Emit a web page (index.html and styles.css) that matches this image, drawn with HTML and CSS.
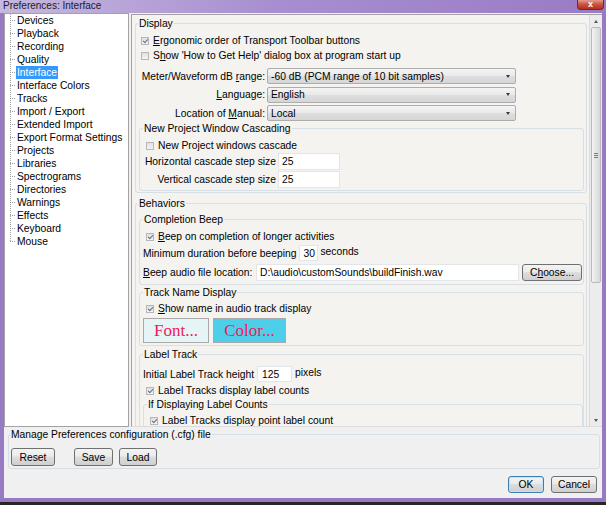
FILE: index.html
```html
<!DOCTYPE html>
<html lang="en">
<head>
    <meta charset="UTF-8">
    <title>Preferences: Interface</title>
    <link rel="stylesheet" href="styles.css">
</head>
<body>

<div class="window">
    <div class="titlebar">
        <span class="title">Preferences: Interface</span>
        <span class="close">x</span>
    </div>

    <div class="client">
        <div class="top">
            <ul class="tree">
                <li><span>Devices</span></li>
                <li><span>Playback</span></li>
                <li><span>Recording</span></li>
                <li><span>Quality</span></li>
                <li class="sel"><span>Interface</span></li>
                <li><span>Interface Colors</span></li>
                <li><span>Tracks</span></li>
                <li><span>Import / Export</span></li>
                <li><span>Extended Import</span></li>
                <li><span>Export Format Settings</span></li>
                <li><span>Projects</span></li>
                <li><span>Libraries</span></li>
                <li><span>Spectrograms</span></li>
                <li><span>Directories</span></li>
                <li><span>Warnings</span></li>
                <li><span>Effects</span></li>
                <li><span>Keyboard</span></li>
                <li><span>Mouse</span></li>
            </ul>

            <div class="panel">
                <div class="page">
                    <fieldset class="group">
                        <legend>Display</legend>
                        <div class="check first"><span class="box on"></span><span><u>E</u>rgonomic order of Transport Toolbar buttons</span></div>
                        <div class="check"><span class="box"></span><span>S<u>h</u>ow 'How to Get Help' dialog box at program start up</span></div>

                        <div class="combos">
                            <span class="lbl">Meter/Waveform dB <u>r</u>ange:</span>
                            <span class="combo">-60 dB (PCM range of 10 bit samples)</span>
                            <span class="lbl"><u>L</u>anguage:</span>
                            <span class="combo">English</span>
                            <span class="lbl">Location of <u>M</u>anual:</span>
                            <span class="combo">Local</span>
                        </div>

                        <fieldset class="group sub cascade">
                            <legend>New Project Window Cascading</legend>
                            <div class="check first"><span class="box"></span><span>New Project windows cascade</span></div>
                            <div class="fields">
                                <span class="lbl">Horizontal cascade step size</span>
                                <span class="edit">25</span>
                                <span class="lbl">Vertical cascade step size</span>
                                <span class="edit">25</span>
                            </div>
                        </fieldset>
                    </fieldset>

                    <fieldset class="group behaviors">
                        <legend>Behaviors</legend>

                        <fieldset class="group sub beep">
                            <legend>Completion Beep</legend>
                            <div class="check first"><span class="box on"></span><span><u>B</u>eep on completion of longer activities</span></div>
                            <div class="row duration">
                                <span>Minimum duration before beeping</span>
                                <span class="edit small">30</span>
                                <span class="unit">seconds</span>
                            </div>
                            <div class="row file">
                                <span class="file-lbl"><u>B</u>eep audio file location:</span>
                                <span class="edit path">D:\audio\customSounds\buildFinish.wav</span>
                                <button class="btn choose">C<u>h</u>oose...</button>
                            </div>
                        </fieldset>

                        <fieldset class="group sub names">
                            <legend>Track Name Display</legend>
                            <div class="check first"><span class="box on"></span><span><u>S</u>how name in audio track display</span></div>
                            <div class="swatches">
                                <span class="swatch font-swatch">Font...</span>
                                <span class="swatch color-swatch">Color...</span>
                            </div>
                        </fieldset>

                        <fieldset class="group sub labels">
                            <legend>Label Track</legend>
                            <div class="row height">
                                <span>Initial Label Track height</span>
                                <span class="edit mid">125</span>
                                <span class="unit">pixels</span>
                            </div>
                            <div class="check"><span class="box on"></span><span>Label Tracks display label counts</span></div>

                            <fieldset class="group sub inner">
                                <legend>If Displaying Label Counts</legend>
                                <div class="check first"><span class="box on"></span><span>Label Tracks display point label count</span></div>
                            </fieldset>
                        </fieldset>
                    </fieldset>
                </div>

                <div class="vscroll">
                    <span class="arrow up"></span>
                    <span class="thumb"><span class="grip"></span></span>
                    <span class="track"></span>
                    <span class="arrow down"></span>
                </div>
            </div>
        </div>

        <fieldset class="group manage">
            <legend>Manage Preferences configuration (.cfg) file</legend>
            <div class="cfg-buttons">
                <button class="btn reset">Reset</button>
                <button class="btn save">Save</button>
                <button class="btn load">Load</button>
            </div>
        </fieldset>

        <div class="footer">
            <button class="btn ok">OK</button>
            <button class="btn cancel">Cancel</button>
        </div>
    </div>
</div>

</body>
</html>
```

FILE: styles.css
```css
body {
    margin: 0;
    background: #262626;
    font-family: "Liberation Sans", Arial, sans-serif;
    font-size: 10.3px;
    color: #000;
}

u {
    text-decoration-thickness: 1px;
    text-underline-offset: 1px;
}

/* window frame */
.window {
    width: 606px;
    height: 502px;
    box-sizing: border-box;
    padding: 0 4px 4px 4px;
    background: #9779c4;
    display: flex;
    flex-direction: column;
}

.titlebar {
    height: 13px;
    margin: 0 -4px;
    padding: 0 2px 0 3px;
    display: flex;
    justify-content: space-between;
    align-items: flex-start;
    background: linear-gradient(to right, #c6b8df, #a88ed0 45%, #9a7bc5);
}

.title {
    line-height: 11px;
    font-size: 10px;
    color: #1c1c1c;
}

.close {
    width: 27px;
    height: 10px;
    box-sizing: border-box;
    border: 1px solid #6e2b2b;
    border-top: none;
    border-radius: 0 0 4px 4px;
    background: linear-gradient(#e29a8e, #c9513f 50%, #b5301f);
    color: #fff;
    font-weight: bold;
    font-size: 9px;
    line-height: 9px;
    text-align: center;
}

.client {
    flex: 1;
    background: #f0f0f0;
    display: flex;
    flex-direction: column;
}

.top {
    display: flex;
    gap: 2px;
    height: 414px;
}

/* category tree */
.tree {
    width: 125px;
    box-sizing: border-box;
    margin: 0;
    padding: 0;
    list-style: none;
    border: 1px solid #a3a3a3;
    background-color: #fff;
    background-image: repeating-linear-gradient(#a0a0a0 0 1px, transparent 1px 2px);
    background-repeat: no-repeat;
    background-position: 5px 0;
    background-size: 1px 227px;
}

.tree li {
    height: 13px;
    line-height: 13px;
    display: flex;
    align-items: center;
    padding-left: 5px;
}

.tree li::before {
    content: '';
    width: 5px;
    border-top: 1px dotted #a0a0a0;
    margin-right: 1px;
}

.tree span {
    padding: 0 1px;
}

.tree .sel span {
    background: #3399ff;
    color: #fff;
}

/* settings page */
.panel {
    flex: 1;
    display: flex;
    margin-top: 1px;
    border: 1px solid #a3a3a3;
    border-right: none;
    border-bottom-color: #dcdcdc;
    background: #f4f3ef;
    overflow: hidden;
}

.page {
    flex: 1;
    min-width: 0;
    padding: 2px 2px 0 3px;
    overflow: hidden;
}

.group {
    margin: 0;
    padding: 0 2px 1px 5px;
    border: 1px solid #d5dfe5;
    border-radius: 3px;
    min-width: 0;
}

.group legend {
    padding: 0 1px;
    margin-left: -3px;
    line-height: 13px;
}

.sub {
    margin-left: -2px;
    padding-left: 6px;
    padding-right: 0;
}

.cascade {
    margin-top: 1px;
    padding-bottom: 2px;
}

.behaviors {
    margin-top: 4px;
}

.beep {
    margin-top: 3px;
    padding-bottom: 3px;
}

.names {
    margin-top: 1px;
    padding-bottom: 2px;
}

.labels {
    margin-top: 2px;
}

.inner {
    margin-left: -3px;
    padding-bottom: 6px;
}

.check {
    display: flex;
    align-items: center;
    height: 15px;
}

.check.first {
    margin-top: 3px;
}

.names .check.first,
.inner .check.first {
    margin-top: 2px;
}

.box {
    width: 8px;
    height: 8px;
    box-sizing: border-box;
    margin-right: 4px;
    border: 1px solid #b7b7b7;
    background: linear-gradient(#e0e0e0, #f4f4f4);
    display: flex;
    align-items: center;
    justify-content: center;
}

.box.on::after {
    content: '';
    width: 2px;
    height: 4px;
    margin-top: -1px;
    border: solid #58708a;
    border-width: 0 1px 1px 0;
    transform: rotate(45deg);
}

.combos {
    display: grid;
    grid-template-columns: 124px 249px;
    column-gap: 2px;
    row-gap: 2.5px;
    margin-top: 5px;
    align-items: center;
}

.lbl {
    text-align: right;
}

.combo {
    height: 16px;
    box-sizing: border-box;
    padding: 0 5px 0 3px;
    border: 1px solid #adadad;
    border-radius: 2px;
    background: linear-gradient(#f4f4f4, #e9e9e9 50%, #dedede 51%, #d6d6d6);
    display: flex;
    align-items: center;
    justify-content: space-between;
}

.combo::after {
    content: '';
    border-left: 2px solid transparent;
    border-right: 2px solid transparent;
    border-top: 3px solid #3a3a3a;
}

.fields {
    display: grid;
    grid-template-columns: 133px 62px;
    column-gap: 2px;
    row-gap: 1px;
    margin-left: -3px;
    align-items: center;
}

.edit {
    height: 17px;
    box-sizing: border-box;
    padding-left: 3px;
    border: 1px solid #e2e6eb;
    background: #fff;
    display: flex;
    align-items: center;
}

.row {
    display: flex;
    align-items: center;
    margin-left: -3px;
}

.unit {
    margin-bottom: 3px;
}

.duration {
    margin-top: 1px;
}

.edit.small {
    width: 19px;
    height: 16px;
    margin: 0 2px 0 3px;
}

.file {
    margin-top: 3px;
}

.file-lbl {
    width: 113px;
}

.edit.path {
    width: 263px;
}

.height {
    margin-top: 5px;
    margin-bottom: 1px;
}

.edit.mid {
    width: 35px;
    height: 16px;
    padding-left: 4px;
    margin: 0 3px 0 3px;
}

.swatches {
    display: flex;
    gap: 4px;
    margin: 2px 0 0 -3px;
}

.swatch {
    height: 25px;
    box-sizing: border-box;
    border: 1px solid #a9a9a9;
    font-family: "Liberation Serif", "Times New Roman", serif;
    font-size: 17px;
    color: #f2195b;
    display: flex;
    align-items: center;
    justify-content: center;
}

.font-swatch {
    width: 66px;
    background: #e5f5f5;
}

.color-swatch {
    width: 73px;
    background: #4dcfe9;
}

/* scrollbar */
.vscroll {
    width: 13px;
    box-sizing: border-box;
    border-left: 1px solid #dadada;
    background: #ececec;
    display: flex;
    flex-direction: column;
    align-items: center;
}

.arrow {
    height: 12px;
    display: flex;
    align-items: center;
    justify-content: center;
}

.arrow.up::after {
    content: '';
    border-left: 2px solid transparent;
    border-right: 2px solid transparent;
    border-bottom: 3px solid #5a5a5a;
}

.arrow.down::after {
    content: '';
    border-left: 2px solid transparent;
    border-right: 2px solid transparent;
    border-top: 3px solid #5a5a5a;
}

.thumb {
    width: 10px;
    height: 256px;
    box-sizing: border-box;
    border: 1px solid #b9b9b9;
    border-radius: 2px;
    background: linear-gradient(to right, #f3f3f3, #e4e4e4 50%, #d7d7d7);
    display: flex;
    align-items: center;
    justify-content: center;
}

.grip {
    width: 4px;
    height: 5px;
    background: repeating-linear-gradient(#7c7c7c 0 1px, transparent 1px 2px);
}

.track {
    flex: 1;
}

/* buttons */
.btn {
    height: 18px;
    box-sizing: border-box;
    padding: 0;
    border: 1px solid #707070;
    border-radius: 3px;
    background: linear-gradient(#f3f3f3, #ebebeb 45%, #dddddd 50%, #cfcfcf);
    font-family: inherit;
    font-size: inherit;
    color: #000;
}

.choose {
    width: 60px;
    height: 17px;
    margin-left: 3px;
}

.manage {
    margin: 1px 2px 0 4px;
    padding: 0 2px 2px 4px;
}

.cfg-buttons {
    display: flex;
    margin: 7px 0 0 -2px;
}

.reset {
    width: 44px;
}

.save {
    width: 39px;
    margin-left: 19px;
}

.load {
    width: 38px;
    margin-left: 6px;
}

.footer {
    display: flex;
    justify-content: flex-end;
    gap: 7px;
    padding: 7px 5px 4px 0;
}

.footer .btn {
    height: 17px;
}

.ok {
    width: 36px;
    border-color: #3c7fb1;
    box-shadow: inset 0 0 0 1px #bfe3f7;
}

.cancel {
    width: 46px;
}
```
